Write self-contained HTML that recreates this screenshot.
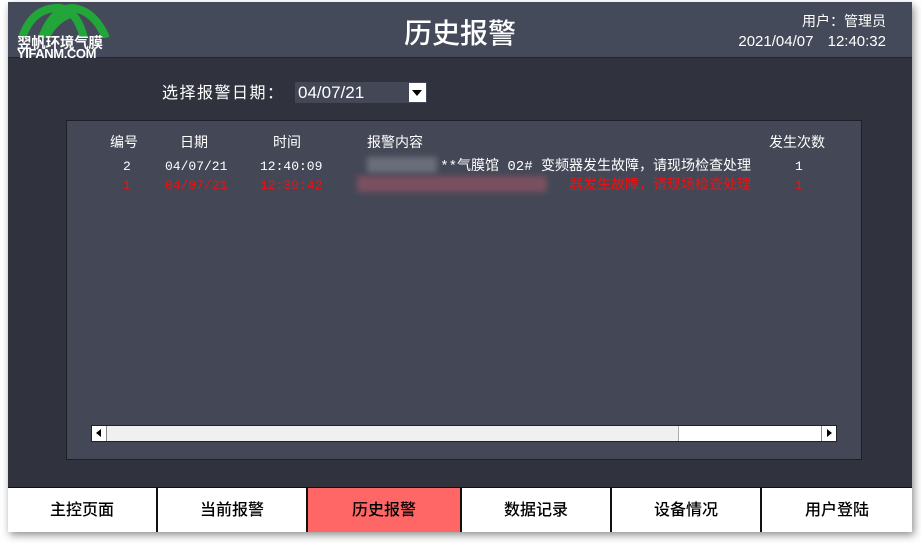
<!DOCTYPE html>
<html><head><meta charset="utf-8"><style>
*{margin:0;padding:0;box-sizing:border-box}
body{width:921px;height:545px;background:#fff;position:relative;overflow:hidden;font-family:"Liberation Sans","Noto Sans CJK SC",sans-serif}
.frame{position:absolute;left:8px;top:2px;width:904px;height:529px;background:#30333d;box-shadow:2px 4px 8px rgba(0,0,0,.45)}
.hdr{position:absolute;left:0;top:0;width:904px;height:56px;background:#444a59;border-bottom:1px solid #25272e}
.title{position:absolute;left:0;width:904px;top:12px;text-align:center;color:#fff;font-size:28px;font-family:"Noto Sans CJK SC",sans-serif;line-height:36px;font-weight:500}
.user{position:absolute;right:26px;top:10px;color:#fff;font-size:14px;font-family:"Noto Sans CJK SC",sans-serif;line-height:18px}
.clock{position:absolute;right:26px;top:31px;color:#fff;font-size:15px;line-height:18px;word-spacing:10px}
.logo-t{position:absolute;left:9px;top:34px;color:#fff;font-size:14.5px;font-family:"Noto Sans CJK SC",sans-serif;font-weight:bold;line-height:14px;letter-spacing:-.2px}
.logo-u{position:absolute;left:9px;top:46px;color:#fff;font-size:13px;font-weight:bold;line-height:12px;letter-spacing:-.4px}
.lbl{position:absolute;left:154px;top:79px;color:#fff;font-size:16px;font-family:"Noto Sans CJK SC",sans-serif;letter-spacing:1.5px;line-height:20px}
.sel{position:absolute;left:287px;top:80px;width:132px;height:21px;background:#434756;color:#fff;font-size:17px;line-height:21px;padding-left:3px}
.arr{position:absolute;right:1px;top:1px;width:17px;height:19px;background:#fff}
.arr:after{content:"";position:absolute;left:3px;top:7px;border-left:5px solid transparent;border-right:5px solid transparent;border-top:6px solid #000}
.panel{position:absolute;left:58px;top:118px;width:796px;height:340px;background:#444856;border:1px solid #1e2027}
.th{position:absolute;top:12px;color:#fff;font-size:14px;font-family:"Noto Sans CJK SC",sans-serif;line-height:18px}
.r{position:absolute;font-size:13px;font-family:"Liberation Mono","Noto Sans CJK SC",monospace;line-height:16px;white-space:nowrap}
.m{position:absolute;font-size:14px;font-family:"Liberation Mono","Noto Sans CJK SC",monospace;line-height:16px;white-space:nowrap;text-align:right;right:110px}
.w{color:#fff}.red{color:#f01010}
.sb{position:absolute;left:24px;top:304px;width:746px;height:17px;background:#f0f0f0;border:1px solid #222}
.sb .l,.sb .rr{position:absolute;top:0;width:15px;height:15px;background:#fff}
.sb .l{left:0;border-right:1px solid #888}.sb .rr{right:0;border-left:1px solid #888}
.sb .l:after{content:"";position:absolute;left:4px;top:3px;border-top:4px solid transparent;border-bottom:4px solid transparent;border-right:5px solid #000}
.sb .rr:after{content:"";position:absolute;left:5px;top:3px;border-top:4px solid transparent;border-bottom:4px solid transparent;border-left:5px solid #000}
.thumb{position:absolute;left:586px;top:0;width:145px;height:15px;background:#fff;border-left:1px solid #aaa}
.nav{position:absolute;left:0;top:485px;width:904px;height:44px;display:flex;border-top:1px solid #111}
.nav div{height:44px;background:#fff;border-right:2px solid #111;text-align:center;line-height:40px;font-size:16px;font-family:"Noto Sans CJK SC",sans-serif;color:#000;font-weight:500}
.nav .act{background:#ff6666}
.blur{position:absolute;filter:blur(3px)}
</style></head><body>
<div class="frame">
 <div class="hdr">
  <svg style="position:absolute;left:6px;top:2px" width="100" height="34" viewBox="0 0 100 34">
   <g fill="none" stroke="#22a63a" stroke-width="8">
    <path d="M8 34 Q18 4 44 4 Q62 4 70 34"/>
    <path d="M28 34 Q38 6 58 4 Q80 6 92 34"/>
   </g>
   <path d="M32 34 Q44 12 62 10" stroke="#22a63a" stroke-width="6" fill="none"/>
  </svg>
  <div class="logo-t">翌帆环境气膜</div>
  <div class="logo-u">YIFANM.COM</div>
  <div class="title">历史报警</div>
  <div class="user">用户：管理员</div>
  <div class="clock">2021/04/07 12:40:32</div>
 </div>
 <div class="lbl">选择报警日期：</div>
 <div class="sel">04/07/21<div class="arr"></div></div>
 <div class="panel">
  <div class="th" style="left:43px">编号</div>
  <div class="th" style="left:113px">日期</div>
  <div class="th" style="left:206px">时间</div>
  <div class="th" style="left:300px">报警内容</div>
  <div class="th" style="left:702px">发生次数</div>
  <div class="r w" style="left:56px;top:38px">2</div>
  <div class="r w" style="left:98px;top:38px">04/07/21</div>
  <div class="r w" style="left:193px;top:38px">12:40:09</div>
  <div class="blur" style="left:300px;top:36px;width:70px;height:16px;background:#6a6e7a"></div>
  <div class="m w" style="top:38px">**气膜馆 02# 变频器发生故障，请现场检查处理</div>
  <div class="r w" style="left:728px;top:38px">1</div>
  <div class="r red" style="left:56px;top:57px">1</div>
  <div class="r red" style="left:98px;top:57px">04/07/21</div>
  <div class="r red" style="left:193px;top:57px">12:39:42</div>
  <div class="blur" style="left:290px;top:55px;width:190px;height:16px;background:#7a5060"></div>
  <div class="m red" style="top:57px">器发生故障，请现场检查处理</div>
  <div class="r red" style="left:728px;top:57px">1</div>
  <div class="sb"><div class="l"></div><div class="thumb"></div><div class="rr"></div></div>
 </div>
 <div class="nav">
  <div style="width:150px">主控页面</div>
  <div style="width:150px">当前报警</div>
  <div class="act" style="width:154px">历史报警</div>
  <div style="width:150px">数据记录</div>
  <div style="width:150px">设备情况</div>
  <div style="width:150px;border-right:none">用户登陆</div>
 </div>
</div>
</body></html>
